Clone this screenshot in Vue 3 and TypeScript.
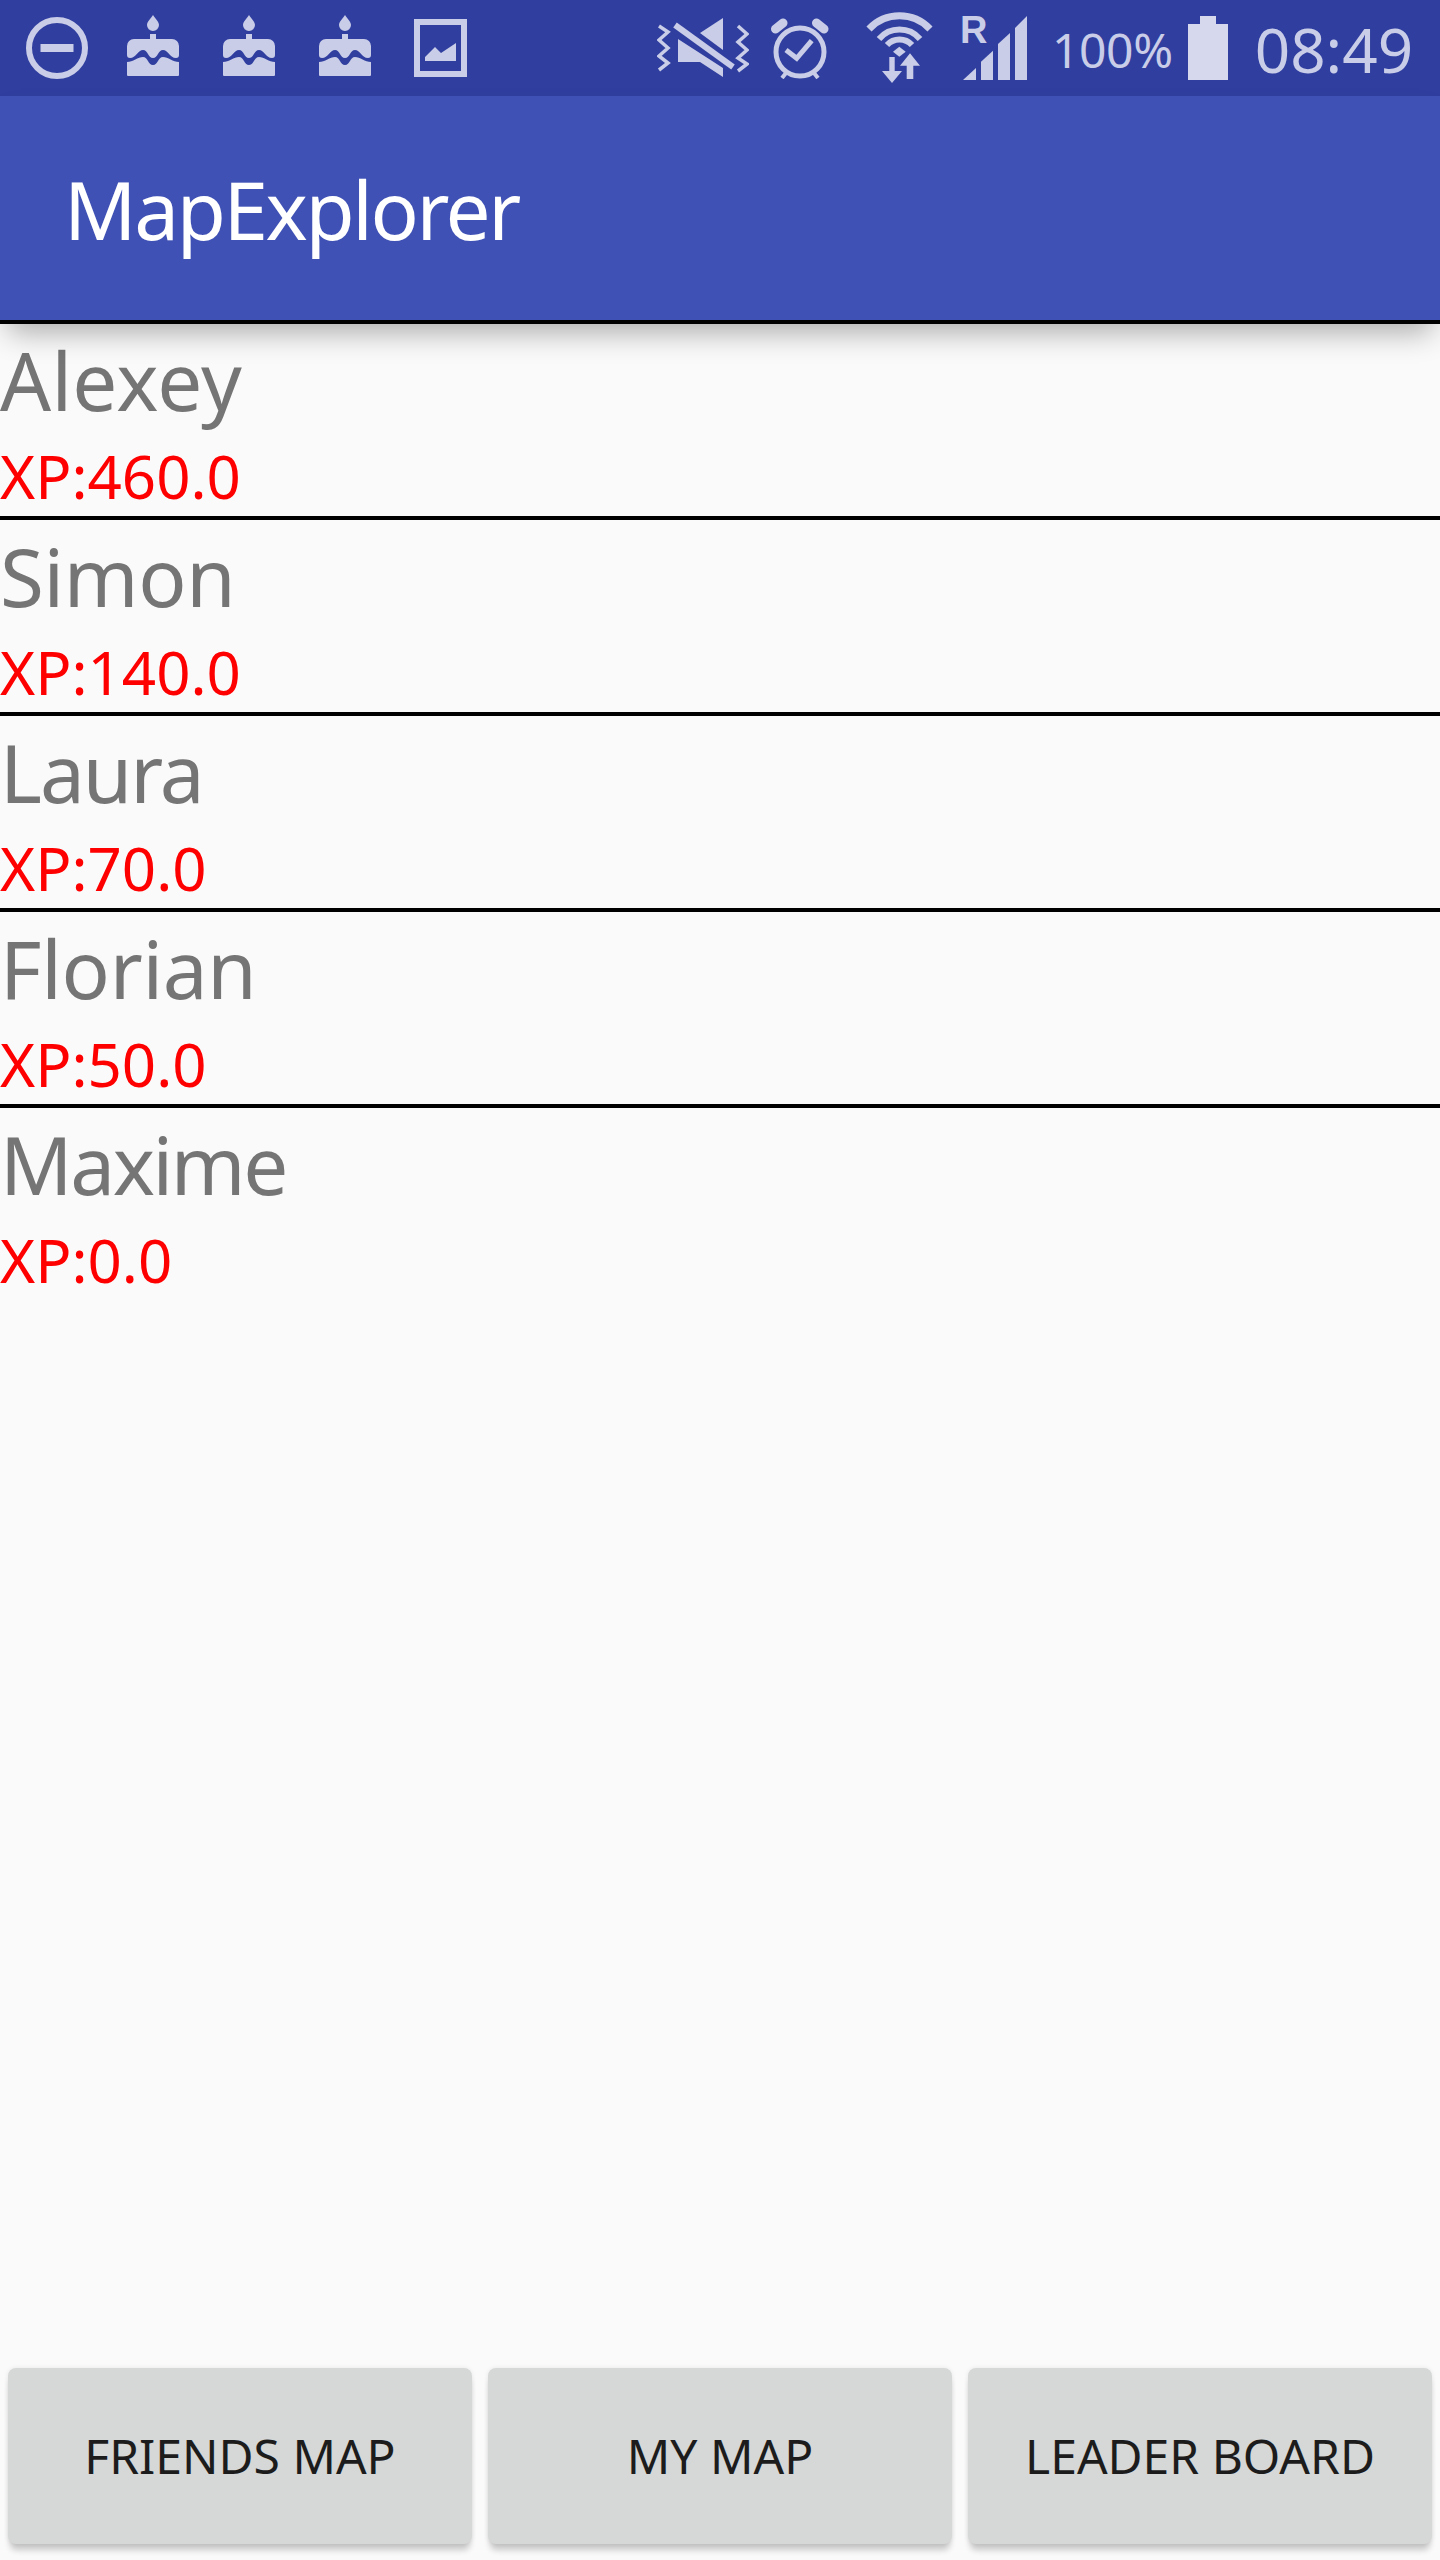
<script setup lang="ts">
const players = [
  { name: 'Alexey', xp: '460.0', tracking: 0.3 },
  { name: 'Simon', xp: '140.0', tracking: -0.4 },
  { name: 'Laura', xp: '70.0', tracking: -2 },
  { name: 'Florian', xp: '50.0', tracking: -0.3 },
  { name: 'Maxime', xp: '0.0', tracking: -2.4 },
]
const cakes = [1, 2, 3]
const buttons = ['FRIENDS MAP', 'MY MAP', 'LEADER BOARD']
</script>

<template>
  <div class="page">
    <header class="status">
      <svg class="dnd" width="62" height="62" viewBox="0 0 62 62">
        <circle cx="31" cy="31" r="28" fill="none" stroke="#c9cde8" stroke-width="6" />
        <rect x="14.5" y="27" width="33" height="8" fill="#c9cde8" />
      </svg>
      <svg v-for="c in cakes" :key="c" class="cake" width="52" height="62" viewBox="0 0 52 62" fill="#c9cde8">
        <path d="M26 0C28 3 32 7 32 10A6 6 0 0 1 20 10C20 7 24 3 26 0Z" />
        <rect x="23" y="19" width="6" height="6" />
        <path d="M7 24H45a7 7 0 0 1 7 7v9q0 3-3 3c-6 0-8-8-13-8s-5 8-10 8-5-8-10-8-7 8-13 8q-3 0-3-3v-9a7 7 0 0 1 7-7z" />
        <path d="M0 47c6 0 11-5 16-5s5 8 10 8 5-8 10-8 10 5 16 5V60q0 1-1 1H1q-1 0-1-1z" />
      </svg>
      <svg class="picture" width="53" height="58" viewBox="0 0 53 58" fill="#c9cde8">
        <path fill-rule="evenodd" d="M0 0H53V58H0ZM6 6V52H47V6Z" />
        <path d="M11 42V38L21 28 27 34 42 24V42Z" />
      </svg>

      <svg class="mute" width="92" height="60" viewBox="0 0 92 60" fill="#c9cde8">
        <path d="M66 0V32L43 15Z" />
        <path d="M21 21 66 50V59L43 44H21Z" />
        <path d="M18 7 76 49" stroke="#c9cde8" stroke-width="6" fill="none" />
        <path d="M2 8 11 14 2 22 11 30 2 38 11 45 2 52" stroke="#c9cde8" stroke-width="3.5" fill="none" />
        <path d="M81 8 90 16 81 24 90 32 81 40 90 46 81 53" stroke="#c9cde8" stroke-width="3.5" fill="none" />
      </svg>
      <svg class="alarm" width="60" height="62" viewBox="0 0 60 62" fill="none" stroke="#c9cde8">
        <circle cx="30" cy="35" r="24" stroke-width="5" />
        <path d="M5.5 12 13 6M46.500 6 54 12" stroke-width="9" stroke-linecap="round" />
        <path d="M16 33 26.700 41.300 41.700 23.700" stroke-width="5" />
        <path d="M16 56 12 61M44 56 48 61" stroke-width="4" />
      </svg>
      <svg class="wifi" width="67" height="71" viewBox="0 0 67 71">
        <g fill="none" stroke="#c9cde8">
          <path d="M3 17A42 42 0 0 1 64 17" stroke-width="7" />
          <path d="M13 27A27 27 0 0 1 54 27" stroke-width="6" />
          <path d="M21 33A17 17 0 0 1 46 33" stroke-width="6" />
        </g>
        <g fill="#c9cde8">
          <path d="M27 39.700 33.300 34.700 39.700 39.700 33.300 44.700Z" />
          <path d="M23.300 45H28.700V59H36L26 71 16 59H23.300Z" />
          <path d="M44 41.300 54 53.700H47.300V67H40.700V53.700H34Z" />
        </g>
      </svg>
      <svg class="signal" width="67" height="72" viewBox="0 -8 67 72" fill="#c9cde8">
        <text x="0" y="27" class="roaming">R</text>
        <path d="M3 64 16 52V64Z" />
        <path d="M21 64V45.700L33 34.700V64Z" />
        <path d="M38 64V28L50 17V64Z" />
        <path d="M55 64V12L67 0V64Z" />
      </svg>
      <span class="percent">100%</span>
      <div class="battery"><i></i><b></b></div>
      <span class="clock">08:49</span>
    </header>

    <div class="appbar">MapExplorer</div>

    <ul class="list">
      <li v-for="p in players" :key="p.name" class="row">
        <div class="name" :style="{ letterSpacing: p.tracking + 'px' }">{{ p.name }}</div>
        <div class="xp">XP:{{ p.xp }}</div>
      </li>
    </ul>

    <div class="actions">
      <button v-for="b in buttons" :key="b" type="button">{{ b }}</button>
    </div>
  </div>
</template>

<style>
html,
body {
  margin: 0;
  background: #fafafa;
}
</style>

<style scoped>
.page {
  width: 1440px;
  height: 2560px;
  display: flex;
  flex-direction: column;
  background: #fafafa;
  font-family: "Noto Sans", sans-serif;
  overflow: hidden;
}

.status {
  height: 96px;
  flex: none;
  display: flex;
  align-items: center;
  background: #303f9f;
  color: #c9cde8;
  padding-left: 26px;
}

.cake {
  margin: -5px 0 0 39px;
}
.cake ~ .cake {
  margin-left: 44px;
}
.picture {
  margin-left: 43px;
}
.mute {
  margin-left: 190px;
}
.alarm {
  margin-left: 21px;
}
.wifi {
  margin: -1px 0 0 36px;
}
.signal {
  margin: -8px 0 0 27px;
}
.roaming {
  font-family: "Liberation Sans", sans-serif;
  font-size: 38px;
  font-weight: 700;
}
.percent {
  margin: 2px 0 0 25px;
  font-size: 48px;
  letter-spacing: -0.4px;
}
.battery {
  margin-left: 15px;
  width: 40px;
  display: flex;
  flex-direction: column;
  align-items: center;
}
.battery i {
  display: block;
  width: 16px;
  height: 8px;
  background: #d6d9ee;
}
.battery b {
  display: block;
  width: 40px;
  height: 56px;
  background: #d6d9ee;
}
.clock {
  margin: 2px 0 0 27px;
  font-size: 62px;
}

.appbar {
  height: 224px;
  flex: none;
  position: relative;
  z-index: 1;
  padding-left: 64px;
  display: flex;
  align-items: center;
  background: #3f51b5;
  border-bottom: 4px solid #000;
  box-shadow: 0 16px 28px -8px rgba(0, 0, 0, 0.32);
  color: #fff;
  font-size: 80px;
  letter-spacing: -2.4px;
}

.list {
  flex: 1;
  margin: 0;
  padding: 0;
  list-style: none;
}
.row {
  height: 192px;
  border-bottom: 4px solid #000;
}
.row:last-child {
  border-bottom: 0;
}
.name {
  height: 112px;
  line-height: 112px;
  font-size: 80px;
  color: #757575;
}
.xp {
  height: 80px;
  line-height: 80px;
  font-size: 60px;
  color: #f00;
}

.actions {
  flex: none;
  display: flex;
  gap: 16px;
  padding: 0 8px 16px;
}
.actions button {
  flex: 1;
  height: 176px;
  border: 0;
  border-radius: 8px;
  padding: 0 0 2px;
  background: #d6d7d7;
  color: #1c1c1c;
  font-family: inherit;
  font-size: 48px;
  box-shadow: 0 8px 6px -2px rgba(0, 0, 0, 0.2), 0 0 5px rgba(0, 0, 0, 0.08);
}
</style>
